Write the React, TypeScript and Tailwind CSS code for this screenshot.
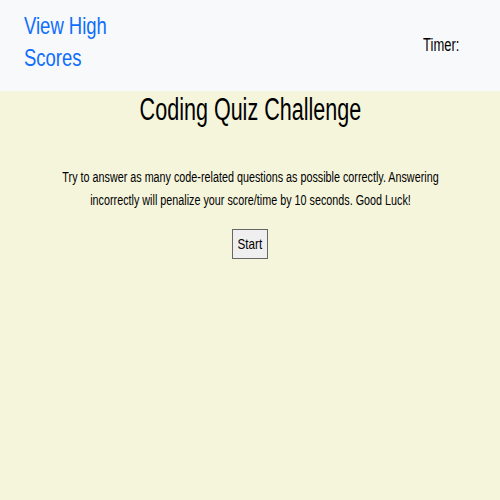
export default function App() {
  return (
    <div className="min-h-[500px] overflow-x-hidden bg-[#f5f5dc] font-['Liberation_Sans',Arial,sans-serif] text-black">
      <header className="flex h-[91px] items-start justify-between bg-[#f8f9fa] pl-6 pr-[41px]">
        <a href="#" className="mt-[10px] inline-block origin-left scale-x-[0.77] text-[24px] leading-[32px] text-[#0d6efd]">
          View High
          <br />
          Scores
        </a>
        <span className="mt-[35px] inline-block origin-right scale-x-[0.72] text-[18px] leading-[20px]">Timer:</span>
      </header>
      <main className="flex flex-col items-center text-center">
        <h1 className="text-[31px] leading-[38px]">
          <span className="inline-block scale-x-[0.695]">Coding Quiz Challenge</span>
        </h1>
        <p className="mt-[37px] w-[495px] scale-x-[0.77] text-[14px] leading-[23px]">
          Try to answer as many code-related questions as possible correctly. Answering incorrectly will penalize your
          score/time by 10 seconds. Good Luck!
        </p>
        <button className="mt-[17px] h-[30px] w-[36px] border border-[#666] bg-[#efefef] text-[15px] leading-[28px]">
          <span className="inline-block scale-x-[0.78]">Start</span>
        </button>
      </main>
    </div>
  );
}
